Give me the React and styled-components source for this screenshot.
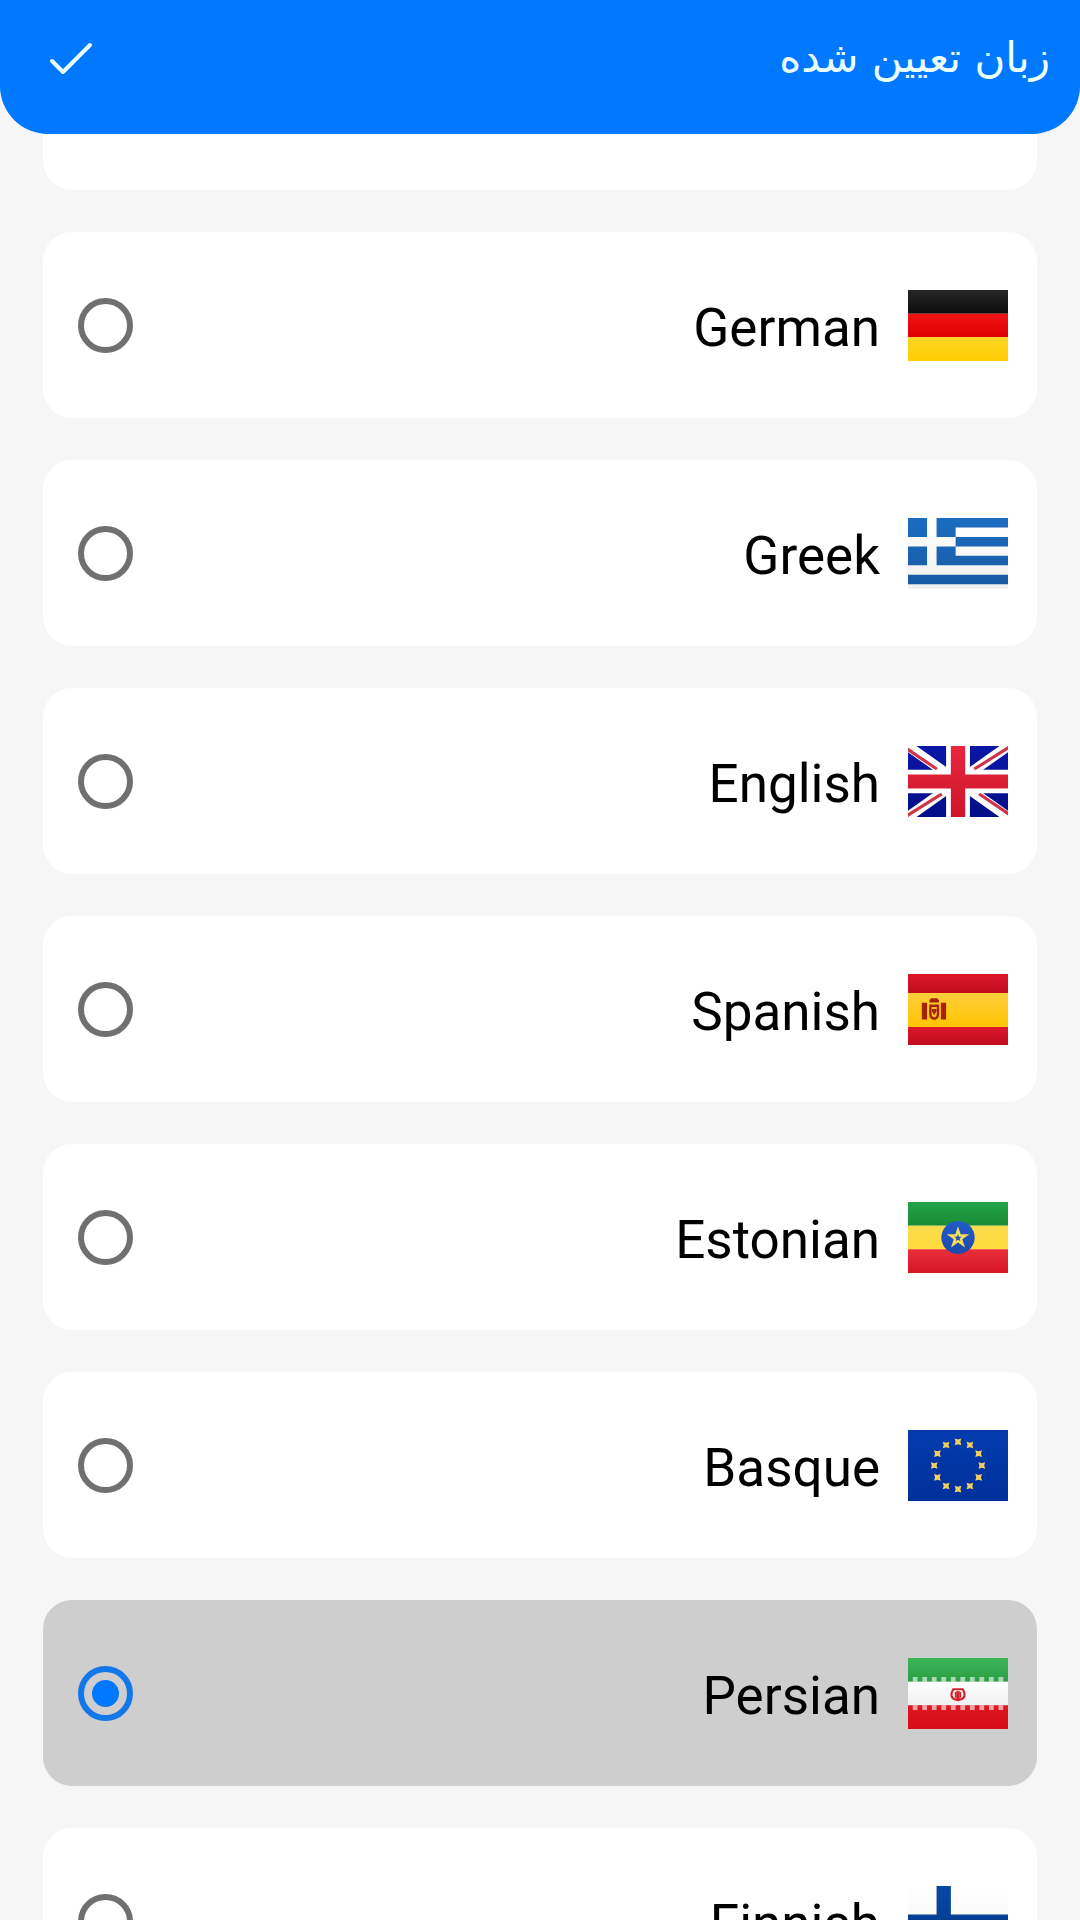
import React, { useState } from "react";
import styled, { createGlobalStyle } from "styled-components";

const GlobalStyle = createGlobalStyle`
  *, *::before, *::after { box-sizing: border-box; }
  body {
    margin: 0;
    background: #f6f6f6;
    font-family: Roboto, "DejaVu Sans", sans-serif;
  }
`;

const Screen = styled.div`
  display: flex;
  flex-direction: column;
  height: 100vh;
  overflow: hidden;
`;

const Header = styled.header`
  position: relative;
  z-index: 1;
  flex: none;
  display: flex;
  align-items: center;
  justify-content: space-between;
  min-height: 134px;
  padding: 0 30px 18px 42px;
  border-radius: 0 0 48px 48px;
  background: #0078ff;
  color: #ecffff;
`;

const Title = styled.h1`
  margin: 0;
  font-family: "DejaVu Sans", sans-serif;
  font-size: 42px;
  font-weight: 400;
  line-height: 56px;
`;

const ConfirmButton = styled.button`
  display: flex;
  padding: 0;
  border: 0;
  background: none;
  color: inherit;
  cursor: pointer;
`;

const List = styled.main`
  flex: 1;
  display: flex;
  flex-direction: column;
  gap: 42px;
  margin-top: -48px;
  padding: 0 43px;
  overflow: hidden;
`;

const PassedCard = styled.div`
  flex: none;
  height: 104px;
  border-radius: 0 0 29px 29px;
  background: #fff;
`;

const Card = styled.label`
  flex: none;
  display: flex;
  align-items: center;
  gap: 28px;
  height: 186px;
  padding: 0 29px 0 35px;
  border-radius: 29px;
  background: ${(p) => (p.$selected ? "#cecece" : "#fff")};
  cursor: pointer;
`;

const Name = styled.span`
  flex: 1;
  padding-top: 5px;
  color: #000;
  font-size: 53px;
  line-height: 62px;
`;

const Radio = styled.input`
  appearance: none;
  display: grid;
  place-items: center;
  width: 55px;
  height: 55px;
  margin: 0;
  border: 6px solid #707070;
  border-radius: 50%;

  &:checked { border-color: #1277e8; }
  &:checked::before {
    content: "";
    width: 27px;
    height: 27px;
    border-radius: 50%;
    background: #0078ff;
  }
`;

const FlagImage = styled.svg`
  flex: none;
  width: 100px;
  height: 71px;
`;

function Fade({ id, from, to }) {
  return (
    <linearGradient id={id} x1="0" y1="0" x2="0" y2="1">
      <stop offset="0" stopColor={from} />
      <stop offset="1" stopColor={to} />
    </linearGradient>
  );
}

function starPoints(cx, cy, outer, inner, count) {
  return Array.from({ length: count * 2 }, (_, i) => {
    const r = i % 2 ? inner : outer;
    const a = (Math.PI * i) / count - Math.PI / 2;
    return `${cx + r * Math.cos(a)},${cy + r * Math.sin(a)}`;
  }).join(" ");
}

const flags = {
  German: (
    <>
      <defs>
        <Fade id="de1" from="#262626" to="#0d0d0d" />
        <Fade id="de2" from="#f01515" to="#dc0000" />
        <Fade id="de3" from="#ffd521" to="#ffcd05" />
      </defs>
      <path fill="url(#de1)" d="M0 0h21v5H0z" />
      <path fill="url(#de2)" d="M0 5h21v5H0z" />
      <path fill="url(#de3)" d="M0 10h21v5H0z" />
    </>
  ),
  Greek: (
    <>
      <defs>
        <Fade id="gr1" from="#ffffff" to="#f0f0f0" />
        <Fade id="gr2" from="#1b6dc1" to="#185ba4" />
      </defs>
      <path fill="url(#gr1)" d="M0 0h21v15H0z" />
      <path
        fill="url(#gr2)"
        d="M0 0h4v4H0zM6 0h15v2H10v2H6zM10 4h11v2H10zM0 6h4v4H0zM6 6h4v2h11v2H6zM0 12h21v2H0z"
      />
    </>
  ),
  English: (
    <>
      <defs>
        <Fade id="gb1" from="#0a17a7" to="#030e88" />
        <Fade id="gb2" from="#e6273e" to="#cf152b" />
      </defs>
      <path fill="url(#gb1)" d="M0 0h21v15H0z" />
      <path stroke="#fff" strokeWidth="2.1" d="M-1-.7l23 16.4M22-.7L-1 15.7" />
      <path
        stroke="#cf3549"
        strokeWidth=".66"
        d="M-.5.4l6.6 4.5M21.5.1l-7.6 4.8M-.5 14.9l7.6-4.8M21.5 14.6l-6.6-4.5"
      />
      <path fill="#fff" d="M8 0h5v5h8v5h-8v5H8v-5H0V5h8z" />
      <path fill="url(#gb2)" d="M9 0h3v6h9v3h-9v6H9V9H0V6h9z" />
    </>
  ),
  Spanish: (
    <>
      <defs>
        <Fade id="es1" from="#dd172c" to="#c20b1e" />
        <Fade id="es2" from="#ffcf3c" to="#ffc400" />
      </defs>
      <path fill="url(#es1)" d="M0 0h21v4H0z" />
      <path fill="url(#es2)" d="M0 4h21v7.2H0z" />
      <path fill="url(#es1)" d="M0 11.2h21V15H0z" />
      <g fill="#a82208">
        <path d="M2.9 6.1h1.1v3.5H2.9zM6.9 6.1H8v3.5H6.9z" />
        <path d="M4.9 5.1h1.2l.4.4v.5h-2v-.5z" />
        <path d="M5 7.4h1v.4l-.5.9-.5-.9z" />
      </g>
      <path
        fill="none"
        stroke="#a82208"
        strokeWidth=".5"
        d="M4.7 6.7h1.6v1.7q0 1-.8 1t-.8-1z"
      />
    </>
  ),
  Estonian: (
    <>
      <defs>
        <Fade id="et1" from="#21a447" to="#198b36" />
        <Fade id="et2" from="#f9dc4a" to="#ffdb3d" />
        <Fade id="et3" from="#e92f3b" to="#d81623" />
        <Fade id="et4" from="#205cca" to="#1b4aa9" />
      </defs>
      <path fill="url(#et1)" d="M0 0h21v5H0z" />
      <path fill="url(#et2)" d="M0 5h21v5H0z" />
      <path fill="url(#et3)" d="M0 10h21v5H0z" />
      <circle cx="10.5" cy="7.5" r="3.5" fill="url(#et4)" />
      <polygon points={starPoints(10.5, 7.6, 2.5, 0.95, 5)} fill="#f5dc5a" />
      <polygon points={starPoints(10.5, 7.6, 0.8, 0.35, 5)} fill="#1d51b5" />
    </>
  ),
  Basque: (
    <>
      <defs>
        <Fade id="eu1" from="#043cae" to="#00309a" />
      </defs>
      <path fill="url(#eu1)" d="M0 0h21v15H0z" />
      {Array.from({ length: 12 }, (_, i) => {
        const a = (Math.PI * i) / 6;
        return (
          <path
            key={i}
            fill="#f0d060"
            transform={`translate(${10.5 + 5 * Math.sin(a)} ${7.5 - 5 * Math.cos(a)})`}
            d="M-.7-.7L0-.5.7-.7.5 0 .7.7 0 .5-.7.7-.5 0z"
          />
        );
      })}
    </>
  ),
  Persian: (
    <>
      <defs>
        <Fade id="ir1" from="#3bb657" to="#2a9f45" />
        <Fade id="ir2" from="#ffffff" to="#f0f0f0" />
        <Fade id="ir3" from="#dc1820" to="#d70b16" />
      </defs>
      <path fill="url(#ir1)" d="M0 0h21v5H0z" />
      <path fill="url(#ir2)" d="M0 5h21v5H0z" />
      <path fill="url(#ir3)" d="M0 10h21v5H0z" />
      {Array.from({ length: 10 }, (_, i) => (
        <path
          key={i}
          fill="#fff"
          fillOpacity=".6"
          d={`M${1 + i * 2} 5v-1h1v1zM${1 + i * 2} 10v1h1v-1z`}
        />
      ))}
      <g fill="none" stroke="#d4202d">
        <path strokeWidth=".45" d="M9.5 6.6q-.9 1.6.3 2.1.7.4 1.4 0 1.2-.5.3-2.1z" />
        <path strokeWidth=".7" d="M10.5 7v1.8" />
        <path strokeWidth=".35" d="M10 7.2v1.2M11 7.2v1.2" />
      </g>
    </>
  ),
  Finnish: (
    <>
      <defs>
        <Fade id="fi1" from="#ffffff" to="#f0f0f0" />
        <Fade id="fi2" from="#0848a6" to="#003580" />
      </defs>
      <path fill="url(#fi1)" d="M0 0h21v15H0z" />
      <path fill="url(#fi2)" d="M6 0h3v6h12v3H9v6H6V9H0V6h6z" />
    </>
  ),
};

function LanguageCard({ name, selected, onSelect }) {
  return (
    <Card $selected={selected}>
      <FlagImage viewBox="0 0 21 15" preserveAspectRatio="none" aria-hidden="true">
        {flags[name]}
      </FlagImage>
      <Name>{name}</Name>
      <Radio
        type="radio"
        name="language"
        value={name}
        checked={selected}
        onChange={() => onSelect(name)}
      />
    </Card>
  );
}

export default function App() {
  const [language, setLanguage] = useState("Persian");
  return (
    <Screen dir="rtl">
      <GlobalStyle />
      <Header>
        <Title lang="fa">زبان تعیین شده</Title>
        <ConfirmButton type="button" aria-label="تأیید">
          <svg width="56" height="56" viewBox="0 0 56 56" fill="none" aria-hidden="true">
            <path
              d="M10 31l11 11 27-27"
              stroke="currentColor"
              strokeWidth="4"
              strokeLinecap="round"
              strokeLinejoin="round"
            />
          </svg>
        </ConfirmButton>
      </Header>
      <List>
        <PassedCard />
        {Object.keys(flags).map((name) => (
          <LanguageCard
            key={name}
            name={name}
            selected={name === language}
            onSelect={setLanguage}
          />
        ))}
      </List>
    </Screen>
  );
}
